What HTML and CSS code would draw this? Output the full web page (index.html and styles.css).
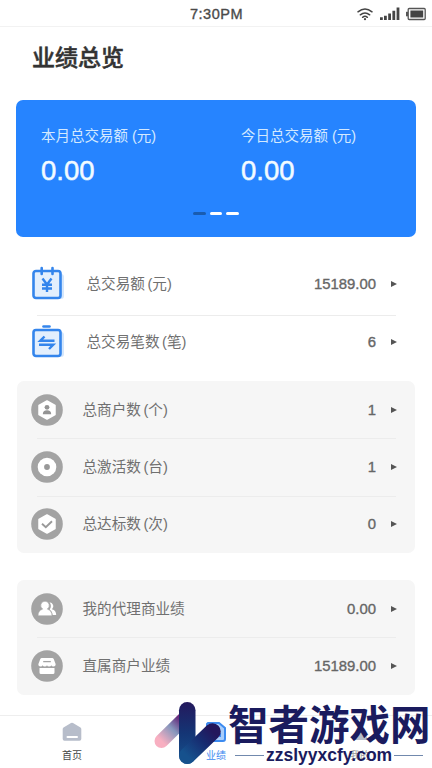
FILE: index.html
```html
<!DOCTYPE html>
<html lang="zh-CN">
<head>
<meta charset="utf-8">
<title>业绩总览</title>
<link rel="stylesheet" href="styles.css">
</head>
<body>
<div class="app">
  <header class="status">
    <span class="time">7:30PM</span>
    <svg class="status-icons" width="72" height="16" viewBox="0 0 72 16">
      <g fill="none" stroke="#444" stroke-width="1.5" stroke-linecap="round">
        <path d="M2 5.800Q9 .2 16 5.800"/><path d="M4.300 8.800Q9 5 13.700 8.800"/><path d="M6.600 11.300Q9 9.400 11.400 11.300"/>
      </g>
      <circle cx="9" cy="13.200" r="1.100" fill="#444"/>
      <path fill="#444" d="M24 11.200h2.800v2.800H24zM28 9.800h2.800V14H28zM32.200 7.600h2.800V14h-2.800zM36.400 4.800h2.800V14h-2.800zM40.600 1.500h2.800V14h-2.800z"/>
      <rect x="52.200" y="2.500" width="17" height="11" rx="1" fill="none" stroke="#555" stroke-width="1.300"/>
      <rect x="54.400" y="4.500" width="12.800" height="7" fill="#444"/>
      <rect x="50" y="5.800" width="2" height="4.500" fill="#555"/>
    </svg>
  </header>
  <h1 class="title">业绩总览</h1>
  <section class="card">
    <div class="stats">
      <div><p class="stat-label">本月总交易额 (元)</p><p class="stat-value">0.00</p></div>
      <div><p class="stat-label">今日总交易额 (元)</p><p class="stat-value">0.00</p></div>
    </div>
    <div class="dots"><i class="on"></i><i></i><i></i></div>
  </section>
  <section class="list plain">
    <div class="row">
      <svg class="icon" width="34" height="36" viewBox="0 0 34 36">
        <rect x="6" y="8" width="27" height="25" rx="3" fill="#d3e6fc"/>
        <rect x="2.500" y="5" width="27" height="27" rx="2.500" fill="#e3effd" stroke="#3485ec" stroke-width="2.600"/>
        <path d="M10.700 2v6M21.500 2v6" stroke="#3485ec" stroke-width="2.600" stroke-linecap="round"/>
        <path d="M11.500 12.500l4.500 6 4.500-6M16 18.500v7.500M11 18.800h10M11 22.500h10" fill="none" stroke="#3485ec" stroke-width="2.400"/>
      </svg>
      <span class="label">总交易额 (元)</span><span class="num">15189.00</span><i class="arrow"></i>
    </div>
    <div class="row">
      <svg class="icon" width="34" height="36" viewBox="0 0 34 36">
        <rect x="6" y="8" width="27" height="25" rx="3" fill="#d3e6fc"/>
        <rect x="2.500" y="6" width="27" height="26" rx="2.500" fill="#e3effd" stroke="#3485ec" stroke-width="2.600"/>
        <path d="M12.500 2.500h6" stroke="#3485ec" stroke-width="2.600" stroke-linecap="round"/>
        <path d="M13.500 12.500l-4.300 4.300h14.300M8 20.700h14.300l-4.300 4.300" fill="none" stroke="#3485ec" stroke-width="2.400"/>
      </svg>
      <span class="label">总交易笔数 (笔)</span><span class="num">6</span><i class="arrow"></i>
    </div>
  </section>
  <section class="list panel">
    <div class="row">
      <svg class="icon" width="32" height="32" viewBox="0 0 32 32"><circle cx="16" cy="16" r="15.800" fill="#a3a3a3"/><path d="M16 7l8 4.500v9L16 25l-8-4.500v-9z" fill="#fff" stroke="#fff" stroke-width="1.500" stroke-linejoin="round"/><circle cx="16" cy="13.300" r="2.400" fill="#949494"/><path d="M11.800 20.300q0-4 4.200-4t4.200 4z" fill="#949494"/></svg>
      <span class="label">总商户数 (个)</span><span class="num">1</span><i class="arrow"></i>
    </div>
    <div class="row">
      <svg class="icon" width="32" height="32" viewBox="0 0 32 32"><circle cx="16" cy="16" r="15.800" fill="#a3a3a3"/><circle cx="16" cy="16" r="9.300" fill="#fff"/><circle cx="16" cy="16" r="2.900" fill="#999"/></svg>
      <span class="label">总激活数 (台)</span><span class="num">1</span><i class="arrow"></i>
    </div>
    <div class="row">
      <svg class="icon" width="32" height="32" viewBox="0 0 32 32"><circle cx="16" cy="16" r="15.800" fill="#a3a3a3"/><path d="M16 7l8 4.500v9L16 25l-8-4.500v-9z" fill="#fff" stroke="#fff" stroke-width="1.500" stroke-linejoin="round"/><path d="M11 15.800l3.800 3.500 6.200-6" fill="none" stroke="#999" stroke-width="1.900"/></svg>
      <span class="label">总达标数 (次)</span><span class="num">0</span><i class="arrow"></i>
    </div>
  </section>
  <section class="list panel second">
    <div class="row">
      <svg class="icon" width="32" height="32" viewBox="0 0 32 32"><circle cx="16" cy="16" r="15.800" fill="#a3a3a3"/><path fill="#fff" d="M18.500 9.300a4 4 0 0 1 2.500 7q4.200 1.300 4.200 5.700h-3.500q-.3-3.500-3-5.500 2.500-3.500-.2-7.200z"/><path d="M14 8.200a4.300 4.300 0 0 1 2.300 7.900q4.700 1.400 4.700 6.700H7q0-5.300 4.700-6.700A4.300 4.300 0 0 1 14 8.200z" fill="#fff" stroke="#a3a3a3" stroke-width=".6"/></svg>
      <span class="label">我的代理商业绩</span><span class="num">0.00</span><i class="arrow"></i>
    </div>
    <div class="row">
      <svg class="icon" width="32" height="32" viewBox="0 0 32 32"><circle cx="16" cy="16" r="15.800" fill="#a3a3a3"/><path fill="#fff" d="M10.800 8h10.400q1 0 1.500 1l2 5.200q0 2.400-2.200 2.400-1.800 0-2.200-1.400-.4 1.400-2.200 1.400t-2.100-1.400q-.4 1.400-2.200 1.400t-2.200-1.400q-.4 1.400-2 1.400-2.400 0-2.300-2.400L9.300 9q.5-1 1.500-1zM8.500 18h15v4.500q0 1.500-1.500 1.500H10q-1.500 0-1.500-1.500z"/><path d="M12.200 11.600h7.600" stroke="#a3a3a3" stroke-width="1.300"/></svg>
      <span class="label">直属商户业绩</span><span class="num">15189.00</span><i class="arrow"></i>
    </div>
  </section>
  <nav class="tabs">
    <div class="tab"><svg width="20" height="20" viewBox="0 0 20 20"><path d="M9 1q1-.7 2 0l7.500 4.500q.8.500.8 1.500v10q0 1.800-1.800 1.800h-15Q.7 18.800.7 17V7q0-1 .8-1.500z" fill="#b7bdca"/><path d="M5.500 15h9.500" stroke="#fff" stroke-width="2" stroke-linecap="round"/></svg><span>首页</span></div>
    <div class="tab active"><svg width="20" height="20" viewBox="0 0 20 20"><path d="M2 1h11l6 5v11q0 2-2 2H3q-2 0-2-2V2z" fill="#a9cdfa" stroke="#3d8bf0" stroke-width="2"/><path d="M6 15V9M10 15V7M14 15v-4" stroke="#3d8bf0" stroke-width="2"/></svg><span>业绩</span></div>
    <div class="tab mine"><svg width="20" height="20" viewBox="0 0 20 20"><path d="M10 5l7 10v3H3v-3z" fill="#b7bdca"/></svg><span>我的</span></div>
  </nav>
  <div class="brand">
    <svg width="78" height="68" viewBox="0 0 78 68">
      <defs>
        <linearGradient id="tail" x1="1" y1="0" x2="0" y2="1"><stop offset="0" stop-color="#8f0b7d"/><stop offset=".22" stop-color="#66307f"/><stop offset=".55" stop-color="#8797bd"/><stop offset="1" stop-color="#f8afc1"/></linearGradient>
        <linearGradient id="stem" x1="0" y1="0" x2="0" y2="1"><stop offset="0" stop-color="#24195d"/><stop offset=".5" stop-color="#143575"/><stop offset="1" stop-color="#16518d"/></linearGradient>
        <linearGradient id="arm" x1="0" y1="1" x2="1" y2="0"><stop offset="0" stop-color="#16518d"/><stop offset=".6" stop-color="#172b70"/><stop offset="1" stop-color="#23175c"/></linearGradient>
      </defs>
      <path d="M8.500 41L34 16" stroke="url(#tail)" stroke-width="14" stroke-linecap="round"/>
      <rect x="26" y="2" width="16.500" height="62" rx="8.250" fill="url(#stem)"/>
      <path d="M34.300 55.800L59.500 31.500" stroke="url(#arm)" stroke-width="16.500" stroke-linecap="round"/>
    </svg>
    <div class="brand-text">
      <div class="brand-name">智者游戏网</div>
      <div class="brand-url"><i></i><span>zzslyyxcfy.com</span><i></i></div>
    </div>
  </div>
</div>
</body>
</html>
```
FILE: styles.css
```css
* { box-sizing: border-box; }
body, h1, p { margin: 0; }
body {
  background: #fff;
  font-family: "Liberation Sans", "Noto Sans CJK SC", sans-serif;
  color: #666;
}
.app {
  position: relative;
  width: 432px;
  height: 768px;
  overflow: hidden;
  display: flex;
  flex-direction: column;
}
.status {
  height: 27px;
  flex: none;
  display: flex;
  justify-content: flex-end;
  align-items: center;
  padding: 1px 4px 0 0;
  border-bottom: 1px solid #f2f2f2;
}
.time {
  width: 54px;
  margin-right: 112px;
  font-size: 14.500px;
  line-height: 16px;
  letter-spacing: .5px;
  color: #4a4a4a;
  white-space: nowrap;
  -webkit-text-stroke: .35px #4a4a4a;
}
.title {
  height: 73px;
  flex: none;
  padding: 12px 0 0 32px;
  font: 500 23px/34px "Noto Sans CJK SC", sans-serif;
  color: #333;
  -webkit-text-stroke: .5px #333;
}
.card {
  height: 137px;
  flex: none;
  margin: 0 16px;
  padding: 26px 0 0 25px;
  border-radius: 7px;
  background: #2684ff;
}
.stats { display: grid; grid-template-columns: 200px 1fr; height: 86px; }
.stat-label { font-size: 14.500px; line-height: 21px; color: #d3e9ff; white-space: nowrap; }
.stat-value {
  margin-top: 8px;
  font-size: 27.500px;
  line-height: 32px;
  color: #f2fbff;
  -webkit-text-stroke: .5px #f2fbff;
}
.dots { display: flex; gap: 4px; padding-left: 152px; }
.dots i { width: 12.500px; height: 3px; border-radius: 2px; background: #fff; }
.dots .on { background: #195cb0; }
.list { flex: none; }
.row {
  position: relative;
  height: 57.300px;
  display: flex;
  align-items: center;
  padding: 0 18px 0 14px;
}
.row + .row::before {
  content: "";
  position: absolute;
  top: 0;
  left: 20px;
  right: 19px;
  height: 1px;
  background: #ececec;
}
.icon { width: 32px; flex: none; margin-right: 19.500px; }
.label { flex: 1; font-size: 14.600px; line-height: 22px; word-spacing: -1.500px; color: #707070; }
.num { font-size: 14.900px; color: #666; -webkit-text-stroke: .35px #666; }
.arrow {
  margin-left: 15px;
  border-left: 6px solid #555;
  border-top: 3.500px solid transparent;
  border-bottom: 3.500px solid transparent;
}
.plain { margin: 17px 17px 0; height: 127px; }
.plain .row { height: 61px; padding-bottom: 1px; }
.plain .icon { width: 34px; margin-right: 21.500px; }
.plain .row + .row { height: 55px; padding-bottom: 2px; }
.plain .row + .row::before { top: 0; }
.panel {
  height: 171.500px;
  margin: 0 17px;
  border-radius: 7px;
  background: #f6f6f6;
}
.panel.second { height: 114.500px; margin-top: 27.500px; }
.tabs {
  height: 53px;
  flex: none;
  margin-top: 20px;
  display: grid;
  grid-template-columns: repeat(3, 1fr);
  border-top: 1px solid #eee;
}
.tab {
  display: flex;
  flex-direction: column;
  align-items: center;
  padding-top: 6px;
  font-size: 10px;
  line-height: 14px;
  color: #444;
}
.tab span { margin-top: 7px; }
.tab.active { color: #3d8bf0; }
.tab.mine { color: #999; }
.brand {
  position: absolute;
  left: 153px;
  top: 700px;
  display: flex;
}
.brand svg { flex: none; }
.brand-text { width: 203px; margin-left: -3px; color: #1a1b5e; }
.brand-name {
  font: 700 40.500px/46px "Noto Sans CJK SC", sans-serif;
  white-space: nowrap;
}
.brand-url { display: flex; align-items: center; gap: 2px; margin: -1px 0 0 7px; }
.brand-url i { width: 29px; height: 1px; background: #7189ad; }
.brand-url span { font-size: 17.500px; line-height: 20px; font-weight: 700; }
```
